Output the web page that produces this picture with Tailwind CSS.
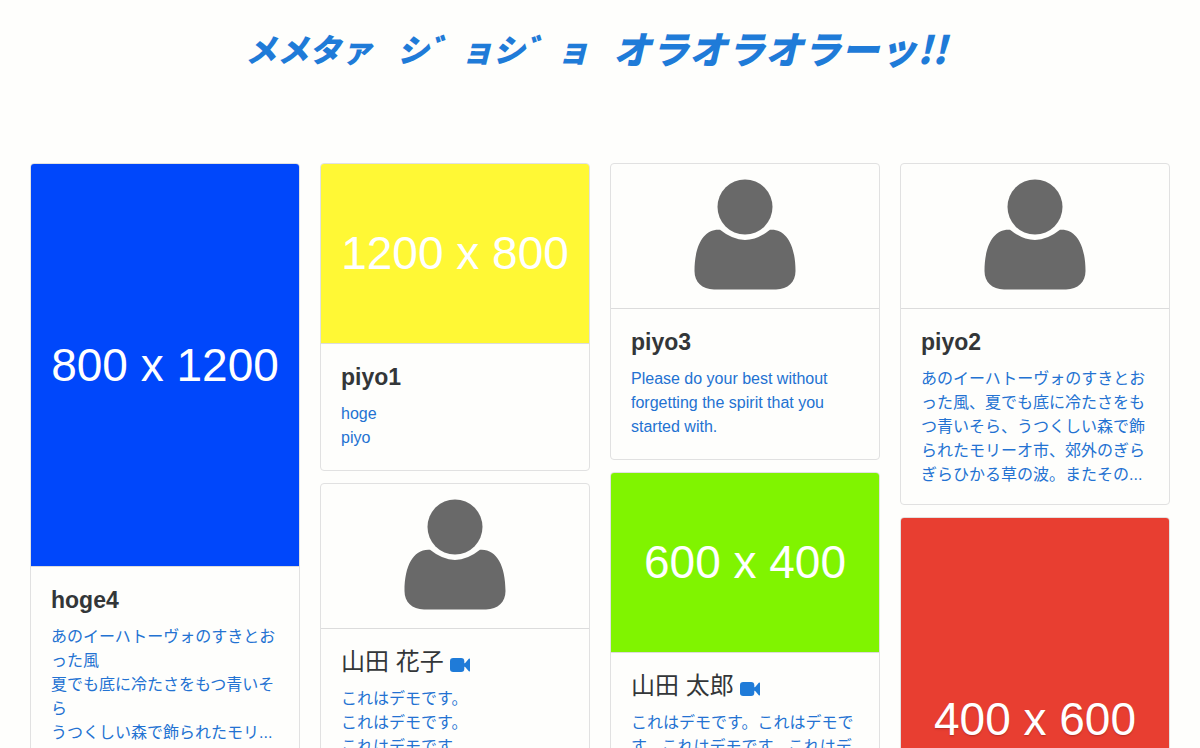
<!DOCTYPE html>
<html lang="ja">
<head>
<meta charset="utf-8">
<meta name="viewport" content="width=device-width, initial-scale=1">
<title>メメタァ ジョジョ オラオラオラーッ!!</title>
<script src="https://cdn.jsdelivr.net/npm/@tailwindcss/browser@4"></script>
</head>
<body class="bg-[#fefefc] font-['Liberation_Sans','Noto_Sans_CJK_JP',sans-serif] text-base text-[#2372d2]">
<svg class="hidden" aria-hidden="true">
  <symbol id="person" viewBox="0 0 102 111">
    <circle cx="51" cy="28" r="27.5"/>
    <path d="M26 50.8Q51 71 76 50.8C92 49.5 101.5 66 101.5 92C101.5 103 94 110.4 82 110.4H20C8 110.4 .5 103 .5 92C.5 66 10 49.5 26 50.8Z"/>
  </symbol>
  <symbol id="video" viewBox="0 0 20 14">
    <rect width="14.3" height="14" rx="3.2"/>
    <path d="M13.5 7L18.8 .8Q20 0 20 1.2V12.8Q20 14 18.8 13.2Z"/>
    <path d="M13 5.5L16 5V9L13 8.5Z"/>
  </symbol>
</svg>

<header class="flex h-[163px] items-start justify-center pt-6">
  <h1 class="flex items-center gap-6 pr-2 whitespace-nowrap font-['Noto_Sans_CJK_JP',sans-serif] font-black italic leading-[48px] text-[#1f7bd8]">
    <span class="text-[32px]">メメタァ</span>
    <span class="text-[32px]">シ゛ョシ゛ョ</span>
    <span class="text-[38px]">オラオラオラーッ!!</span>
  </h1>
</header>

<main class="grid grid-cols-4 items-start gap-5 px-[30px]">
  <div class="flex flex-col gap-3">
    <article class="overflow-hidden rounded border border-[#e1e1e1]">
      <div class="flex aspect-[2/3] items-center justify-center bg-[#0047fb] text-[46px] text-white">800 x 1200</div>
      <div class="border-t border-[#dcdcdc] p-5">
        <h2 class="mb-3 text-[23px] leading-[26px] font-bold text-[#333638]">hoge4</h2>
        <p class="leading-6"><a href="#hoge4">あのイーハトーヴォのすきとおった風<br>夏でも底に冷たさをもつ青いそら<br>うつくしい森で飾られたモリ...</a></p>
      </div>
    </article>
  </div>

  <div class="flex flex-col gap-3">
    <article class="overflow-hidden rounded border border-[#e1e1e1]">
      <div class="flex aspect-[3/2] items-center justify-center bg-[#fff835] text-[46px] text-white">1200 x 800</div>
      <div class="border-t border-[#dcdcdc] p-5">
        <h2 class="mb-3 text-[23px] leading-[26px] font-bold text-[#333638]">piyo1</h2>
        <p class="leading-6"><a href="#piyo1">hoge<br>piyo</a></p>
      </div>
    </article>
    <article class="overflow-hidden rounded border border-[#e1e1e1]">
      <div class="flex justify-center pt-[15px] pb-[18px] text-[#696969]"><svg class="h-[111px] w-[102px] fill-current" aria-hidden="true"><use href="#person"/></svg></div>
      <div class="border-t border-[#dcdcdc] p-5">
        <h2 class="mb-3 flex items-center gap-1.5 text-2xl leading-[26px] text-[#333638]">山田 花子<svg class="mt-1.5 h-3.5 w-5 fill-[#1f7bd8]" aria-hidden="true"><use href="#video"/></svg></h2>
        <p class="leading-6"><a href="#hanako">これはデモです。<br>これはデモです。<br>これはデモです。</a></p>
      </div>
    </article>
  </div>

  <div class="flex flex-col gap-3">
    <article class="overflow-hidden rounded border border-[#e1e1e1]">
      <div class="flex justify-center pt-[15px] pb-[18px] text-[#696969]"><svg class="h-[111px] w-[102px] fill-current" aria-hidden="true"><use href="#person"/></svg></div>
      <div class="border-t border-[#dcdcdc] p-5">
        <h2 class="mb-3 text-[23px] leading-[26px] font-bold text-[#333638]">piyo3</h2>
        <p class="leading-6"><a href="#piyo3">Please do your best without forgetting the spirit that you started with.</a></p>
      </div>
    </article>
    <article class="overflow-hidden rounded border border-[#e1e1e1]">
      <div class="flex aspect-[3/2] items-center justify-center bg-[#80f400] text-[46px] text-white">600 x 400</div>
      <div class="border-t border-[#dcdcdc] p-5">
        <h2 class="mb-3 flex items-center gap-1.5 text-2xl leading-[26px] text-[#333638]">山田 太郎<svg class="mt-1.5 h-3.5 w-5 fill-[#1f7bd8]" aria-hidden="true"><use href="#video"/></svg></h2>
        <p class="leading-6"><a href="#taro">これはデモです。これはデモです。これはデモです。これはデモです。</a></p>
      </div>
    </article>
  </div>

  <div class="flex flex-col gap-3">
    <article class="overflow-hidden rounded border border-[#e1e1e1]">
      <div class="flex justify-center pt-[15px] pb-[18px] text-[#696969]"><svg class="h-[111px] w-[102px] fill-current" aria-hidden="true"><use href="#person"/></svg></div>
      <div class="border-t border-[#dcdcdc] px-5 pt-5 pb-[17px]">
        <h2 class="mb-3 text-[23px] leading-[26px] font-bold text-[#333638]">piyo2</h2>
        <p class="leading-6"><a href="#piyo2">あのイーハトーヴォのすきとおった風、夏でも底に冷たさをもつ青いそら、うつくしい森で飾られたモリーオ市、郊外のぎらぎらひかる草の波。またその...</a></p>
      </div>
    </article>
    <article class="overflow-hidden rounded border border-[#e1e1e1]">
      <div class="flex aspect-[2/3] items-center justify-center bg-[#e83e31] text-[46px] text-white text-shadow-sm">400 x 600</div>
    </article>
  </div>
</main>
</body>
</html>
